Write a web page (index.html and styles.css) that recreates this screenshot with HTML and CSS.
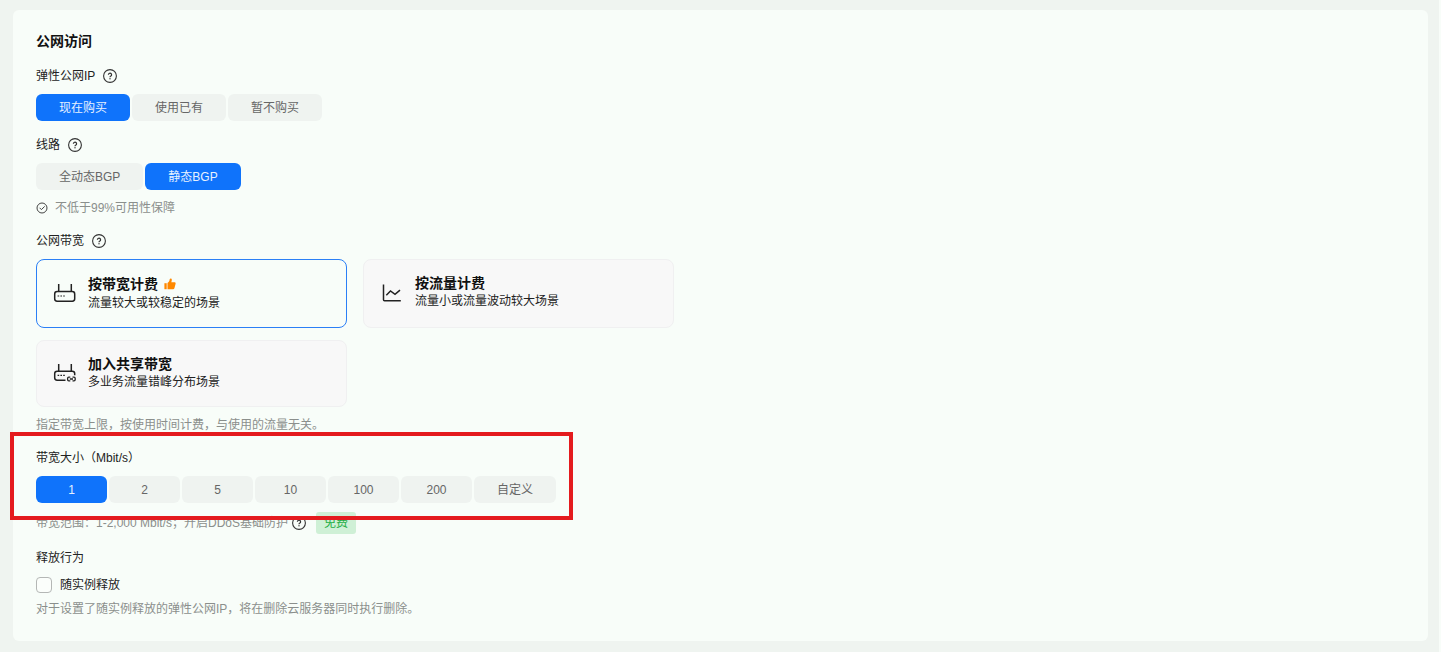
FILE: index.html
```html
<!DOCTYPE html>
<html lang="zh-CN">
<head>
    <meta charset="UTF-8">
    <meta name="viewport" content="width=device-width, initial-scale=1.0">
    <title>公网访问</title>
    <link rel="stylesheet" href="styles.css">
</head>
<body>
    <svg class="sprite" aria-hidden="true">
        <symbol id="icon-help" viewBox="0 0 14 14">
            <circle cx="7" cy="7" r="6.4" fill="none" stroke="currentColor" stroke-width="1.1"/>
            <path d="M5.4 5.800a1.600 1.600 0 1 1 2.500 1.300c-.6.400-.9.600-.9 1.100" fill="none" stroke="currentColor" stroke-width="1.2"/>
            <circle cx="7" cy="9.700" r=".7" fill="currentColor"/>
        </symbol>
    </svg>

    <main class="panel">
        <h1>公网访问</h1>

        <section class="field">
            <div class="label">弹性公网IP <button class="help" aria-label="帮助"><svg width="14" height="14"><use href="#icon-help"/></svg></button></div>
            <div class="segments">
                <button class="segment active">现在购买</button>
                <button class="segment">使用已有</button>
                <button class="segment">暂不购买</button>
            </div>
        </section>

        <section class="field">
            <div class="label">线路 <button class="help" aria-label="帮助"><svg width="14" height="14"><use href="#icon-help"/></svg></button></div>
            <div class="segments">
                <button class="segment">全动态BGP</button>
                <button class="segment active">静态BGP</button>
            </div>
            <div class="hint">
                <svg class="check" width="12" height="12" viewBox="0 0 12 12" fill="none" stroke="currentColor">
                    <circle cx="6" cy="6" r="5"/>
                    <path d="M3.6 5.8l1.8 1.8 3.3-3.2"/>
                </svg>
                不低于99%可用性保障
            </div>
        </section>

        <section class="field">
            <div class="label">公网带宽 <button class="help" aria-label="帮助"><svg width="14" height="14"><use href="#icon-help"/></svg></button></div>
            <div class="cards">
                <button class="card selected">
                    <svg width="24" height="24" viewBox="0 0 24 24" fill="none" stroke="currentColor" stroke-width="1.5">
                        <path d="M5.7 3v7.5M18.3 3v7.5"/>
                        <rect x="1.7" y="10.6" width="20" height="9.6" rx="2.4"/>
                        <path d="M4.6 15h1.6M7.4 15h1.6M10.2 15h1.6" stroke-width="1.2"/>
                    </svg>
                    <span class="card-text">
                        <span class="card-title">按带宽计费
                            <svg class="thumb" width="12" height="12" viewBox="0 0 12 12" fill="currentColor">
                                <path d="M.4 5.2h2.3v6H.4z"/>
                                <path d="M3.5 11.2V5.1C4.8 4.3 5.5 3 5.7 1.3C5.8 .4 7.7 .2 7.8 1.7c0 1-.2 1.7-.5 2.500h3.200c.9 0 1.300.7 1.100 1.500l-1.200 4.500c-.2.7-.6 1-1.300 1z"/>
                            </svg>
                        </span>
                        <span class="card-desc">流量较大或较稳定的场景</span>
                    </span>
                </button>
                <button class="card">
                    <svg width="24" height="24" viewBox="0 0 24 24" fill="none" stroke="currentColor" stroke-width="1.5">
                        <path d="M3.5 3.5v15.2q0 1 1 1H20.8"/>
                        <path d="M6.3 14.2l4.2-4.3 4.5 3.5 5-4.3"/>
                    </svg>
                    <span class="card-text">
                        <span class="card-title">按流量计费</span>
                        <span class="card-desc">流量小或流量波动较大场景</span>
                    </span>
                </button>
                <button class="card">
                    <svg width="24" height="24" viewBox="0 0 24 24" fill="none" stroke="currentColor" stroke-width="1.5">
                        <path d="M5.7 3v7M18.3 3v7"/>
                        <path d="M12.5 19.2H4.1q-2.4 0-2.4-2.4v-4.2q0-2.4 2.4-2.4h15.2q2.4 0 2.4 2.4v1.6"/>
                        <path d="M4.6 14.4h1.6M7.4 14.4h1.6M10.2 14.4h1.6" stroke-width="1.2"/>
                        <path d="M17.3 16.2h-1.500q-1.200 0-1.200 1.200v1.200q0 1.200 1.200 1.200h1.500M19.500 16.200h1.500q1.200 0 1.200 1.200v1.200q0 1.200-1.200 1.200h-1.500M16.800 18h3.200" stroke-width="1.300"/>
                    </svg>
                    <span class="card-text">
                        <span class="card-title">加入共享带宽</span>
                        <span class="card-desc">多业务流量错峰分布场景</span>
                    </span>
                </button>
            </div>
            <div class="hint">指定带宽上限，按使用时间计费，与使用的流量无关。</div>
        </section>

        <section class="field">
            <div class="highlight">
                <div class="label">带宽大小（Mbit/s）</div>
                <div class="segments">
                    <button class="segment active">1</button>
                    <button class="segment">2</button>
                    <button class="segment">5</button>
                    <button class="segment">10</button>
                    <button class="segment">100</button>
                    <button class="segment">200</button>
                    <button class="segment">自定义</button>
                </div>
            </div>
            <div class="hint range">
                带宽范围：1-2,000 Mbit/s；开启DDoS基础防护
                <button class="help" aria-label="帮助"><svg width="14" height="14"><use href="#icon-help"/></svg></button>
                <span class="tag">免费</span>
            </div>
        </section>

        <section class="field">
            <div class="label">释放行为</div>
            <div class="check-row">
                <input type="checkbox" id="release">
                <label for="release">随实例释放</label>
            </div>
            <div class="hint release-hint">对于设置了随实例释放的弹性公网IP，将在删除云服务器同时执行删除。</div>
        </section>
    </main>
</body>
</html>
```
FILE: styles.css
```css
* {
    box-sizing: border-box;
}
body {
    margin: 0;
    padding: 10px 11px 11px 13px;
    min-height: 100vh;
    background-color: #eff4f0;
    border-right: 2px solid #f8fdf9;
    color: #222;
    font-family: "Liberation Sans", "Noto Sans CJK SC", sans-serif;
    font-size: 12px;
    line-height: 18px;
}
button {
    font: inherit;
    color: inherit;
    border: none;
    background: none;
    padding: 0;
    cursor: pointer;
}
svg {
    display: block;
    flex: none;
}
.sprite {
    position: absolute;
    width: 0;
    height: 0;
}
.panel {
    background-color: #f8fdf9;
    border-radius: 6px;
    padding: 21px 23px 23px;
}
h1 {
    margin: 0;
    font-size: 14px;
    line-height: 21px;
    color: #111;
}
.field {
    margin-top: 15px;
}
.label {
    display: flex;
    align-items: center;
    gap: 8px;
    height: 18px;
    margin-bottom: 9px;
}
.help {
    color: #333;
}
.segments {
    display: flex;
    flex-wrap: wrap;
    gap: 2px;
}
.segment {
    min-width: 71px;
    height: 27px;
    padding: 0 23px;
    border-radius: 6px;
    background-color: #eff3f0;
    color: #666;
}
.segment.active {
    background-color: #0f73fb;
    color: #e6f1ff;
}
.hint {
    display: flex;
    align-items: center;
    gap: 7px;
    margin-top: 9px;
    color: #8b8f8c;
}
.check {
    color: #444;
}

/* Billing mode cards */
.cards {
    display: grid;
    grid-template-columns: 1fr 1fr;
    gap: 12px 16px;
    max-width: 638px;
}
.card {
    display: flex;
    align-items: center;
    gap: 11px;
    padding: 14px 16px 15px;
    border: 1px solid #f0f0f1;
    border-radius: 8px;
    background-color: #f8f8f8;
    color: #222;
    text-align: left;
}
.card.selected {
    border-color: #2b7ff6;
    background-color: #f8fdf9;
}
.card-text {
    align-self: flex-start;
}
.card-title {
    display: flex;
    align-items: center;
    gap: 6px;
    font-size: 14px;
    font-weight: bold;
    color: #111;
}
.selected .card-title {
    line-height: 20px;
}
.card-desc {
    display: block;
}
.thumb {
    color: #ff8800;
}

/* Bandwidth size, framed in red */
.highlight {
    position: relative;
    width: fit-content;
}
.highlight::after {
    content: '';
    position: absolute;
    inset: -17px -17px -17px -26px;
    border: 4px solid #e41b1e;
    pointer-events: none;
    z-index: 1;
}
.range {
    gap: 4px;
}
.tag {
    margin-left: 6px;
    padding: 0 8px;
    border-radius: 3px;
    background-color: #cff0d6;
    color: #1fae45;
    line-height: 22px;
}

.check-row {
    display: flex;
    align-items: center;
    gap: 8px;
}
.check-row input {
    appearance: none;
    width: 16px;
    height: 16px;
    margin: 0;
    border: 1px solid #b4b7b5;
    border-radius: 4px;
    background-color: #fbfefb;
}
.check-row input:checked {
    border-color: #0f73fb;
    background-color: #0f73fb;
}
.release-hint {
    margin-top: 6px;
}
```
